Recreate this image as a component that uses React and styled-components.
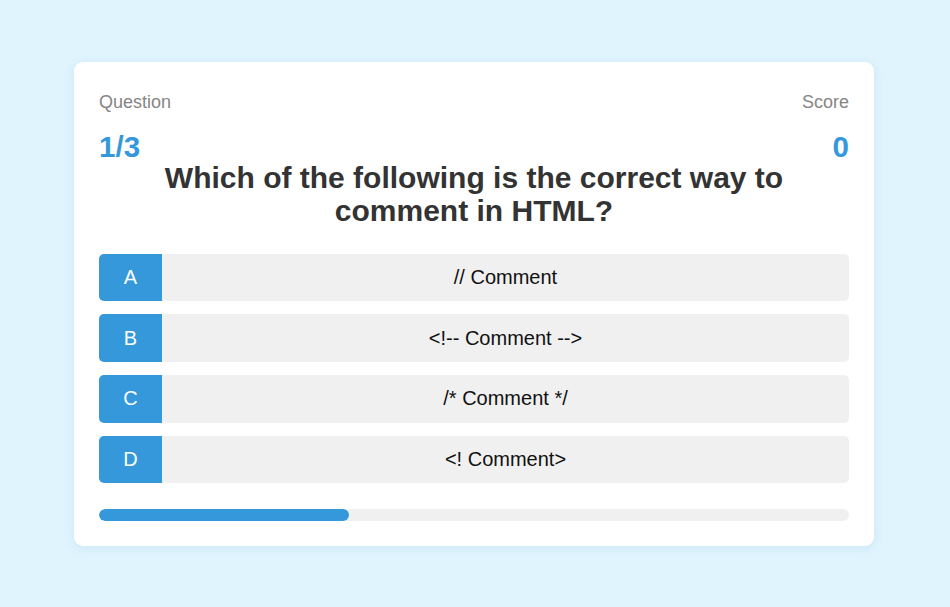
import React, { useState } from 'react';
import styled, { createGlobalStyle } from 'styled-components';

const GlobalStyle = createGlobalStyle`
  * {
    box-sizing: border-box;
  }
  body {
    margin: 0;
    font-family: "Liberation Sans", Arial, sans-serif;
    background-color: #dff4fd;
  }
`;

// Page and card
const Page = styled.div`
  height: 100vh;
  display: flex;
  align-items: center;
  justify-content: center;
  padding: 1px 2px 0 0;
`;

const Card = styled.div`
  width: 800px;
  background-color: #fff;
  border-radius: 9px;
  box-shadow: 0 2px 10px rgba(90, 160, 200, 0.15);
  padding: 30px 25px 25px;
`;

// Header with question counter and score
const Header = styled.div`
  display: flex;
  justify-content: space-between;
`;

const Stat = styled.div`
  display: flex;
  flex-direction: column;
  align-items: ${({ $align }) => ($align === 'right' ? 'flex-end' : 'flex-start')};
`;

const StatLabel = styled.span`
  font-size: 18px;
  line-height: 21px;
  color: #868686;
`;

const StatValue = styled.span`
  margin-top: 18px;
  font-size: 29.5px;
  line-height: 32px;
  font-weight: bold;
  color: #3498db;
`;

const QuestionText = styled.h2`
  margin: -2px 0 27px;
  font-size: 30px;
  line-height: 33px;
  font-weight: bold;
  text-align: center;
  color: #333;
  padding: 0 60px;
`;

// Answer options
const Options = styled.div`
  display: flex;
  flex-direction: column;
  gap: 13px;
`;

const Option = styled.button`
  display: flex;
  height: 47.67px;
  padding: 0;
  border: none;
  border-radius: 5px;
  overflow: hidden;
  background-color: #f0f0f0;
  font-family: inherit;
  font-size: 20px;
  color: #111;
  cursor: pointer;
  text-align: center;

  &:hover {
    background-color: #e6e6e6;
  }
`;

const Letter = styled.span`
  flex: 0 0 63px;
  display: flex;
  align-items: center;
  justify-content: center;
  background-color: #3498db;
  color: #fff;
`;

const OptionLabel = styled.span`
  flex: 1;
  display: flex;
  align-items: center;
  justify-content: center;
`;

// Progress bar
const Progress = styled.div`
  margin-top: 26px;
  height: 12px;
  border-radius: 6px;
  background-color: #f0f0f0;
  overflow: hidden;
`;

const ProgressFill = styled.div`
  height: 100%;
  border-radius: 6px;
  background-color: #3498db;
`;

const questions = [
  {
    text: 'Which of the following is the correct way to comment in HTML?',
    options: ['// Comment', '<!-- Comment -->', '/* Comment */', '<! Comment>'],
  },
];

const letters = ['A', 'B', 'C', 'D'];

const App = () => {
  const [current] = useState(0);
  const [score] = useState(0);
  const total = 3;
  const question = questions[current];

  return (
    <>
      <GlobalStyle />
      <Page>
        <Card>
          <Header>
            <Stat>
              <StatLabel>Question</StatLabel>
              <StatValue>{current + 1}/{total}</StatValue>
            </Stat>
            <Stat $align="right">
              <StatLabel>Score</StatLabel>
              <StatValue>{score}</StatValue>
            </Stat>
          </Header>
          <QuestionText>{question.text}</QuestionText>
          <Options>
            {question.options.map((opt, i) => (
              <Option key={opt}>
                <Letter>{letters[i]}</Letter>
                <OptionLabel>{opt}</OptionLabel>
              </Option>
            ))}
          </Options>
          <Progress>
            <ProgressFill style={{ width: `${((current + 1) / total) * 100}%` }} />
          </Progress>
        </Card>
      </Page>
    </>
  );
};

export default App;
